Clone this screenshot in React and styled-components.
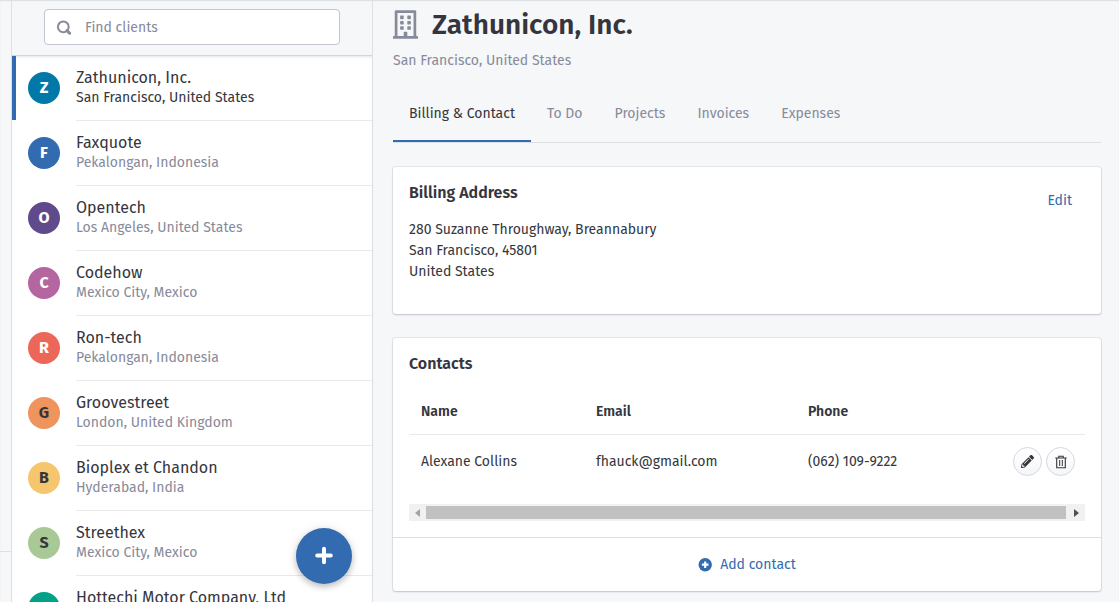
import React from "react";
import styled, { createGlobalStyle, css } from "styled-components";
import { FaPencilAlt, FaRegBuilding } from "react-icons/fa";

const color = {
  page: "#f5f7f9",
  text: "#35363d",
  muted: "#878a9a",
  primary: "#336bb0",
  line: "#dddfe3",
};

const GlobalStyle = createGlobalStyle`
  *, *::before, *::after { box-sizing: border-box; }
  body {
    margin: 0;
    background: ${color.page};
    color: ${color.text};
    font: 14px/20px "Fira Sans", "Noto Sans", sans-serif;
  }
  button, input { font: inherit; color: inherit; }
  button { cursor: pointer; }
`;

const Shell = styled.div`
  display: flex;
  height: 100vh;
  overflow: hidden;
  box-shadow: inset 0 1px 1px #dcdee1;
`;

const NavEdge = styled.div`
  flex: 0 0 11px;
  display: flex;
  flex-direction: column;
  justify-content: flex-end;
`;

const NavFoot = styled.div`
  height: 51px;
  border-top: 1px solid ${color.line};
`;

const Sidebar = styled.aside`
  position: relative;
  flex: 0 0 362px;
  display: flex;
  flex-direction: column;
  border: solid ${color.line};
  border-width: 0 1px;
`;

const SearchBar = styled.div`
  flex: none;
  padding: 9px 32px 10px;
  border-bottom: 1px solid #d3d5da;
`;

const SearchField = styled.label`
  display: flex;
  align-items: center;
  gap: 13px;
  height: 36px;
  padding: 0 11px;
  background: #fff;
  border: 1px solid #c3c5d4;
  border-radius: 4px;
  color: ${color.muted};
`;

const SearchInput = styled.input`
  flex: 1;
  min-width: 0;
  padding: 2px 0 0;
  border: 0;
  outline: 0;
  background: none;
  &::placeholder { color: ${color.muted}; opacity: 1; }
`;

const ClientList = styled.ul`
  flex: 1;
  min-height: 0;
  margin: 0;
  padding: 0;
  overflow: hidden;
  list-style: none;
  background: #fff;
  box-shadow: inset 0 3px 3px -2px #e4e5e9;
`;

const ClientLink = styled.a`
  display: flex;
  gap: 16px;
  padding-left: 16px;
  color: ${color.muted};
  text-decoration: none;
  ${(p) => p.$active && css`
    color: ${color.text};
    background: linear-gradient(${color.primary}, ${color.primary}) left top / 4px 64px no-repeat;
  `}
`;

const Avatar = styled.span`
  flex: none;
  width: 32px;
  height: 32px;
  margin-top: 16px;
  border-radius: 50%;
  background: ${(p) => p.$bg};
  color: ${(p) => (p.$dark ? color.text : "#fff")};
  font-size: 16px;
  font-weight: 700;
  line-height: 32px;
  text-align: center;
`;

const ClientText = styled.span`
  flex: 1;
  display: flex;
  flex-direction: column;
  height: 65px;
  padding-top: 12px;
  border-bottom: 1px solid #e8e9ec;
`;

const ClientName = styled.span`
  color: ${color.text};
  font-size: 16px;
`;

const AddButton = styled.button`
  position: absolute;
  right: 20px;
  bottom: 18px;
  display: grid;
  place-items: center;
  width: 56px;
  height: 56px;
  padding: 0;
  border: 0;
  border-radius: 50%;
  background: ${color.primary};
  color: #fff;
  box-shadow: 0 3px 6px rgba(0, 0, 0, 0.22), 0 0 12px rgba(0, 0, 0, 0.08);
`;

const Main = styled.main`
  flex: 1;
  min-width: 0;
  padding: 8px 18px 0 20px;
`;

const TitleRow = styled.header`
  display: flex;
  align-items: center;
  gap: 14px;
  height: 32px;
  svg { width: 25px; height: 29px; color: ${color.muted}; }
`;

const Title = styled.h1`
  margin: 0;
  padding-top: 2px;
  font-size: 28px;
  font-weight: 600;
  line-height: 32px;
`;

const Place = styled.p`
  margin: 11px 0 23px;
  color: ${color.muted};
`;

const Tabs = styled.nav`
  display: flex;
  height: 49px;
  border-bottom: 1px solid ${color.line};
`;

const Tab = styled.a`
  padding: 10px 16px 0;
  color: ${(p) => (p.$active ? color.text : color.muted)};
  border-bottom: 2px solid ${(p) => (p.$active ? color.primary : "transparent")};
  text-decoration: none;
`;

const Card = styled.section`
  margin-top: 24px;
  background: #fff;
  border-radius: 3px;
  box-shadow: 0 0 0 1px rgba(50, 50, 80, 0.08), 0 1px 2px rgba(50, 50, 80, 0.2);
`;

const AddressBody = styled.div`
  display: flex;
  justify-content: space-between;
  align-items: flex-start;
  padding: 16px 16px 32px;
`;

const CardTitle = styled.h2`
  margin: 0;
  font-size: 16px;
  font-weight: 600;
  line-height: 20px;
`;

const Address = styled.address`
  margin-top: 16px;
  font-style: normal;
  line-height: 21px;
`;

const LinkButton = styled.button`
  display: flex;
  align-items: center;
  gap: 8px;
  padding: ${(p) => (p.$wide ? "17px 16px 16px" : "8px 13px")};
  border: 0;
  background: none;
  color: ${color.primary};
`;

const ContactsBody = styled.div`
  padding: 16px;
`;

const Table = styled.table`
  width: 100%;
  margin-top: 12px;
  border-collapse: collapse;
  table-layout: fixed;
`;

const HeadCell = styled.th`
  width: ${(p) => p.$width};
  height: 48px;
  padding: 4px 12px 0;
  border-bottom: 1px solid #e8e9ec;
  font-weight: 600;
  text-align: left;
`;

const Cell = styled.td`
  height: 54px;
  padding: 1px 12px 0;
`;

const Actions = styled.div`
  display: flex;
  justify-content: flex-end;
  gap: 4px;
  margin-right: -2px;
`;

const RoundButton = styled.button`
  display: grid;
  place-items: center;
  width: 29px;
  height: 29px;
  padding: 0;
  border: 1px solid #d5d7e2;
  border-radius: 50%;
  background: linear-gradient(#fff, #f5f6f9);
`;

const ScrollTrack = styled.div`
  display: flex;
  align-items: center;
  height: 17px;
  margin-top: 16px;
  background: #f1f1f1;
`;

const ScrollArrow = styled.span`
  flex: 0 0 17px;
  display: grid;
  place-items: center;
  color: ${(p) => (p.$off ? "#a3a3a3" : "#505050")};
`;

const ScrollThumb = styled.div`
  flex: 1;
  height: 13px;
  margin-right: 2px;
  background: #c1c1c1;
`;

const CardFoot = styled.footer`
  display: flex;
  justify-content: center;
  border-top: 1px solid ${color.line};
`;

const SearchIcon = () => (
  <svg width="16" height="16" viewBox="0 0 16 16" fill="none" stroke="currentColor" aria-hidden="true">
    <circle cx="7.3" cy="7.8" r="5.4" strokeWidth="2" />
    <path d="M11 11.6l2.6 2.6" strokeWidth="3" strokeLinecap="round" />
  </svg>
);

const PlusIcon = () => (
  <svg width="20" height="20" viewBox="0 0 20 20" fill="none" stroke="currentColor" strokeWidth="4" strokeLinecap="round" aria-hidden="true">
    <path d="M10 2.7v13.6M3.2 9.5h13.6" />
  </svg>
);

const PlusCircleIcon = () => (
  <svg width="14" height="14" viewBox="0 0 14 14" aria-hidden="true">
    <circle cx="7.2" cy="6.7" r="6.7" fill="currentColor" />
    <path d="M7.2 3.4v6.6M3.9 6.7h6.6" stroke="#fff" strokeWidth="2.2" />
  </svg>
);

const TrashIcon = () => (
  <svg width="14" height="14" viewBox="0 0 14 14" fill="none" stroke="currentColor" strokeWidth="1.1" aria-hidden="true">
    <path d="M1.3 3h11.4M4.8 3V1.2h4.4V3M2.7 3.2v9.5h8.6V3.2" />
    <path d="M5.7 5v6M8.3 5v6" strokeWidth="1" />
  </svg>
);

const ArrowIcon = ({ d }) => (
  <svg width="5" height="8" viewBox="0 0 5 8" fill="currentColor" aria-hidden="true">
    <path d={d} />
  </svg>
);

const clients = [
  { name: "Zathunicon, Inc.", place: "San Francisco, United States", bg: "#0079a8" },
  { name: "Faxquote", place: "Pekalongan, Indonesia", bg: "#336bb0" },
  { name: "Opentech", place: "Los Angeles, United States", bg: "#5f4b8b" },
  { name: "Codehow", place: "Mexico City, Mexico", bg: "#b565a0" },
  { name: "Ron-tech", place: "Pekalongan, Indonesia", bg: "#ec6759" },
  { name: "Groovestreet", place: "London, United Kingdom", bg: "#ee945c", dark: true },
  { name: "Bioplex et Chandon", place: "Hyderabad, India", bg: "#f6c66e", dark: true },
  { name: "Streethex", place: "Mexico City, Mexico", bg: "#a8c896", dark: true },
  { name: "Hottechi Motor Company, Ltd", place: "", bg: "#00a287" },
];

const tabs = ["Billing & Contact", "To Do", "Projects", "Invoices", "Expenses"];

export default function App() {
  return (
    <>
      <GlobalStyle />
      <Shell>
        <NavEdge><NavFoot /></NavEdge>
        <Sidebar>
          <SearchBar>
            <SearchField>
              <SearchIcon />
              <SearchInput type="text" placeholder="Find clients" aria-label="Find clients" />
            </SearchField>
          </SearchBar>
          <ClientList>
            {clients.map((c, i) => (
              <li key={c.name}>
                <ClientLink href="#" $active={i === 0}>
                  <Avatar $bg={c.bg} $dark={c.dark}>{c.name[0]}</Avatar>
                  <ClientText>
                    <ClientName>{c.name}</ClientName>
                    <span>{c.place}</span>
                  </ClientText>
                </ClientLink>
              </li>
            ))}
          </ClientList>
          <AddButton aria-label="Add client"><PlusIcon /></AddButton>
        </Sidebar>
        <Main>
          <TitleRow>
            <FaRegBuilding />
            <Title>Zathunicon, Inc.</Title>
          </TitleRow>
          <Place>San Francisco, United States</Place>
          <Tabs>
            {tabs.map((t, i) => (
              <Tab key={t} href="#" $active={i === 0}>{t}</Tab>
            ))}
          </Tabs>
          <Card>
            <AddressBody>
              <div>
                <CardTitle>Billing Address</CardTitle>
                <Address>
                  280 Suzanne Throughway, Breannabury<br />
                  San Francisco, 45801<br />
                  United States
                </Address>
              </div>
              <LinkButton>Edit</LinkButton>
            </AddressBody>
          </Card>
          <Card>
            <ContactsBody>
              <CardTitle>Contacts</CardTitle>
              <Table>
                <thead>
                  <tr>
                    <HeadCell $width="175px">Name</HeadCell>
                    <HeadCell $width="212px">Email</HeadCell>
                    <HeadCell>Phone</HeadCell>
                    <HeadCell $width="108px" aria-label="Actions" />
                  </tr>
                </thead>
                <tbody>
                  <tr>
                    <Cell>Alexane Collins</Cell>
                    <Cell>fhauck@gmail.com</Cell>
                    <Cell>(062) 109-9222</Cell>
                    <Cell>
                      <Actions>
                        <RoundButton aria-label="Edit contact"><FaPencilAlt size={13} /></RoundButton>
                        <RoundButton aria-label="Delete contact"><TrashIcon /></RoundButton>
                      </Actions>
                    </Cell>
                  </tr>
                </tbody>
              </Table>
              <ScrollTrack aria-hidden="true">
                <ScrollArrow $off><ArrowIcon d="M5 0v8L0 4z" /></ScrollArrow>
                <ScrollThumb />
                <ScrollArrow><ArrowIcon d="M0 0v8l5-4z" /></ScrollArrow>
              </ScrollTrack>
            </ContactsBody>
            <CardFoot>
              <LinkButton $wide><PlusCircleIcon />Add contact</LinkButton>
            </CardFoot>
          </Card>
        </Main>
      </Shell>
    </>
  );
}
